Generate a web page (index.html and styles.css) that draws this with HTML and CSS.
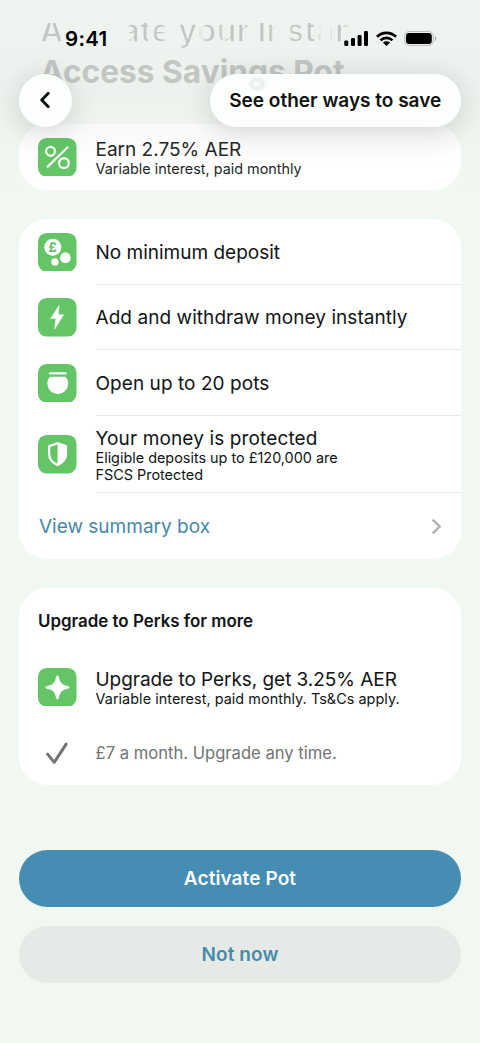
FILE: index.html
```html
<!DOCTYPE html>
<html lang="en">
<head>
<meta charset="utf-8">
<title>Access Savings Pot</title>
<link rel="stylesheet" href="styles.css">
</head>
<body>
<div class="screen">
  <h1 class="page-title"><span class="fading-line">Activate your Instant</span><span>Access Savings Pot</span></h1>

  <main class="content">
    <section class="card rate-card">
      <div class="row rate-row">
        <svg class="tile" viewBox="0 0 38 38"><rect width="38" height="38" rx="8.500"/><g fill="none" stroke="#fff" stroke-opacity=".92" stroke-width="2.300" stroke-linecap="round"><circle cx="12.400" cy="13.200" r="4.400"/><circle cx="25.600" cy="24.800" r="4.800"/><path d="M9.600 28.200 29 9.400"/></g></svg>
        <div class="label raised"><p class="title">Earn 2.75% AER</p><p class="note">Variable interest, paid monthly</p></div>
      </div>
    </section>

    <section class="card">
      <div class="row">
        <svg class="tile" viewBox="0 0 38 38"><rect width="38" height="38" rx="8.500"/><g fill="#fff"><circle cx="14.600" cy="14" r="8.400"/><circle cx="27" cy="24.400" r="5.300"/><circle cx="16.700" cy="28.600" r="3.600"/></g><text class="pound" x="14.500" y="18.400" text-anchor="middle">£</text></svg>
        <div class="label ruled"><p class="title">No minimum deposit</p></div>
      </div>
      <div class="row">
        <svg class="tile" viewBox="0 0 38 38"><rect width="38" height="38" rx="8.500"/><path d="M20.800 7.500 12.600 20.200h5.200l-1.300 10.300 8.700-13.900h-5.400z" fill="#fff" stroke="#fff" stroke-width=".7" stroke-linejoin="round"/></svg>
        <div class="label ruled"><p class="title wide">Add and withdraw money instantly</p></div>
      </div>
      <div class="row">
        <svg class="tile" viewBox="0 0 38 38"><rect width="38" height="38" rx="8.500"/><path d="M11.800 9.300h15.400" stroke="#fff" stroke-width="2.300" stroke-linecap="round"/><path d="M12 12.700h15c1.800 1.800 2.800 4.100 2.800 6.600a10.300 10.300 0 0 1-20.600 0c0-2.500 1-4.800 2.800-6.600z" fill="#fff"/></svg>
        <div class="label ruled"><p class="title wide">Open up to 20 pots</p></div>
      </div>
      <div class="row protected-row">
        <svg class="tile" viewBox="0 0 38 38"><rect width="38" height="38" rx="8.500"/><path d="M19.300 8.200 27.600 11v7.800c0 4.600-3 8.300-8.300 10.800-5.300-2.500-8.300-6.200-8.300-10.800V11z" fill="none" stroke="#fff" stroke-width="2.200" stroke-linejoin="round"/><path d="M19.300 8.200 27.600 11v7.800c0 4.600-3 8.300-8.300 10.800z" fill="#fff"/></svg>
        <div class="label ruled"><p class="title wider">Your money is protected</p><p class="note">Eligible deposits up to £120,000 are<br>FSCS Protected</p></div>
      </div>
      <a class="summary-link"><span>View summary box</span><svg class="chevron" viewBox="0 0 10 16"><path d="M1.500 1.500 8 8l-6.500 6.500"/></svg></a>
    </section>

    <section class="card perks-card">
      <h2 class="heading">Upgrade to Perks for more</h2>
      <div class="row perks-row">
        <svg class="tile" viewBox="0 0 38 38"><rect width="38" height="38" rx="8.500"/><path d="M19.200 7.300c.8 0 1.200.6 1.400 1.500 1.200 5.800 3.100 7.700 8.900 8.900.9.200 1.500.6 1.500 1.400s-.6 1.200-1.500 1.400c-5.800 1.200-7.700 3.100-8.900 8.900-.2.900-.6 1.500-1.400 1.500s-1.200-.6-1.400-1.500c-1.200-5.800-3.100-7.700-8.900-8.900-.9-.2-1.500-.6-1.500-1.400s.6-1.200 1.500-1.400c5.800-1.200 7.700-3.100 8.900-8.900.2-.9.600-1.500 1.400-1.500z" fill="#fff"/></svg>
        <div class="label raised"><p class="title narrow">Upgrade to Perks, get 3.25% AER</p><p class="note terms">Variable interest, paid monthly. Ts&amp;Cs apply.</p></div>
      </div>
      <div class="row price-row">
        <svg class="check" viewBox="0 0 38 38"><path d="M9.500 20.800 16 29 27.800 11"/></svg>
        <p class="label price">£7 a month. Upgrade any time.</p>
      </div>
    </section>

    <div class="actions">
      <button class="button primary">Activate Pot</button>
      <button class="button secondary">Not now</button>
    </div>
  </main>

  <header class="overlay">
    <div class="status">
      <span class="time">9:41</span>
      <div class="indicators">
        <svg width="25" height="16" viewBox="0 0 25 16"><rect x=".3" y="9.500" width="4" height="5.500" rx="1.200"/><rect x="7" y="7" width="4" height="8" rx="1.200"/><rect x="13.600" y="4" width="4" height="11" rx="1.200"/><rect x="20" y="0" width="4" height="15" rx="1.200"/></svg>
        <svg width="21" height="16" viewBox="0 0 21 16"><g fill="none" stroke="#000" stroke-width="2.700"><path d="M1 5.800c5.400-5.300 13.600-5.300 19 0"/><path d="M4.600 9.400c3.400-3.300 8.400-3.300 11.800 0"/></g><path d="M10.500 15 6.900 11.600c2.100-1.900 5.100-1.900 7.200 0z"/></svg>
        <svg width="34" height="16" viewBox="0 0 34 16"><rect x=".600" y=".600" width="28.600" height="13.800" rx="4.300" fill="none" stroke="#b9bcb9" stroke-width="1"/><rect x="2" y="2" width="25.800" height="11" rx="3.200"/><path d="M31 5.200c1.600.5 1.600 4.200 0 4.700z" fill="#9b9e9b"/></svg>
      </div>
    </div>
    <div class="nav">
      <button class="back" aria-label="Back"><svg viewBox="0 0 10 16"><path d="M8.300 1.200 1.700 8l6.600 6.800"/></svg></button>
      <button class="other">See other ways to save<i class="smudge"></i></button>
    </div>
  </header>
</div>
</body>
</html>
```

FILE: styles.css
```css
* { box-sizing: border-box; }
body { margin: 0; background: #f1f8f2; color: #111417; font-family: Inter, "Liberation Sans", sans-serif; }
h1, h2, p { margin: 0; font-weight: 400; }
button { border: 0; padding: 0; font-family: inherit; }
.screen { position: relative; height: 1043px; overflow: hidden; background: linear-gradient(#eff4f0 0, #eef2ee 90px, #f1f8f2 185px); }

.page-title { display: flex; flex-direction: column; height: 124px; padding: 9px 0 0 40px; font-size: 31.7px; line-height: 43px; font-weight: 700; color: #c2c7c3; white-space: nowrap; }
.fading-line {
  height: 41px;
  color: #c2c7c3;
  letter-spacing: .2px;
  -webkit-text-stroke: 1.6px #eff4f0;
  clip-path: inset(14px 0 0 0);
  -webkit-mask-image: linear-gradient(90deg, #000 20px, transparent 22px 88px, #000 91px 107px, transparent 109px 113px, #000 115px 122px, transparent 126px 138px, #000 141px 156px, transparent 162px, #000 167px 180px, transparent 184px, #000 188px 206px, transparent 209px 216px, #000 218px 230px, transparent 237px 249px, #000 252px 260px, transparent 263px 267px, #000 268px 276px, transparent 282px 290px, #000 294px 302px, transparent 309px);
}

.content { padding: 0 19px; }
.card { margin-bottom: 29px; background: #fefffe; border-radius: 28px; overflow: hidden; }
.rate-card { height: 66px; background: linear-gradient(#f8f9f8, #fefffe 40px); }
.row { display: flex; align-items: center; height: 65.600px; padding-left: 19px; }
.rate-row { height: 66px; color: #24272a; }
.protected-row { height: 77.500px; }
.tile { flex: none; width: 38.500px; height: 38.500px; fill: #63c566; }
.label { display: flex; flex-direction: column; justify-content: center; flex: 1; align-self: stretch; margin-left: 19px; padding-top: 1px; }
.label.raised { padding: 0 0 1px; }
.ruled { border-bottom: 1.500px solid #e6e8e6; }
.title { padding-top: 1px; font-size: 19px; line-height: 23px; white-space: nowrap; }
.wide { letter-spacing: .06px; }
.wider { letter-spacing: .13px; }
.narrow { letter-spacing: -.05px; }
.note { margin-top: -1px; font-size: 14.400px; line-height: 17px; white-space: nowrap; }
.terms { letter-spacing: .05px; }
.pound { font: 800 12.500px Inter, sans-serif; fill: #63c566; }
.summary-link { display: flex; align-items: center; justify-content: space-between; height: 66px; padding: 0 19px 0 20px; font-size: 19px; color: #4788a7; }
.chevron { width: 11px; height: 17px; fill: none; stroke: #b0b3b2; stroke-width: 2.300; }

.perks-card { height: 197px; margin-bottom: 65px; }
.heading { padding: 22px 19px 0; font-size: 16.900px; line-height: 22px; font-weight: 600; }
.perks-row { margin-top: 22px; }
.price-row { color: #707473; }
.check { flex: none; width: 38.500px; height: 38.500px; fill: none; stroke: #707473; stroke-width: 2.900; stroke-linecap: round; stroke-linejoin: round; }
.price { font-size: 16.600px; }

.actions { display: flex; flex-direction: column; gap: 19px; }
.button { height: 57px; border-radius: 28.500px; font-size: 19px; font-weight: 600; letter-spacing: .1px; }
.primary { background: #468db3; color: #fbffff; }
.secondary { background: #e5eae6; color: #488aaa; }

.overlay { position: absolute; inset: 0 0 auto; }
.status { display: flex; justify-content: space-between; height: 74px; padding: 26px 42px 0 65px; }
.time { font-size: 20.500px; line-height: 26px; font-weight: 600; letter-spacing: .3px; color: #000; }
.indicators { display: flex; gap: 7px; padding-top: 5px; }
.nav { display: flex; justify-content: space-between; padding: 0 19px; }
.back, .other { height: 52.500px; border-radius: 27px; background: #fcfffb; box-shadow: 0 4px 28px rgba(40, 45, 42, .18); }
.back { display: flex; align-items: center; justify-content: center; width: 53px; padding-right: 2px; }
.back svg { width: 10px; height: 16px; fill: none; stroke: #0a0d0b; stroke-width: 2.800; stroke-linecap: round; stroke-linejoin: round; }
.other { position: relative; width: 251.500px; padding-top: 1px; font-size: 19px; font-weight: 600; color: #101311; }
.smudge { position: absolute; left: 39px; top: 4px; width: 16px; height: 12px; border: 4px solid #eaeeee; border-radius: 6px; filter: blur(1px); }
```
